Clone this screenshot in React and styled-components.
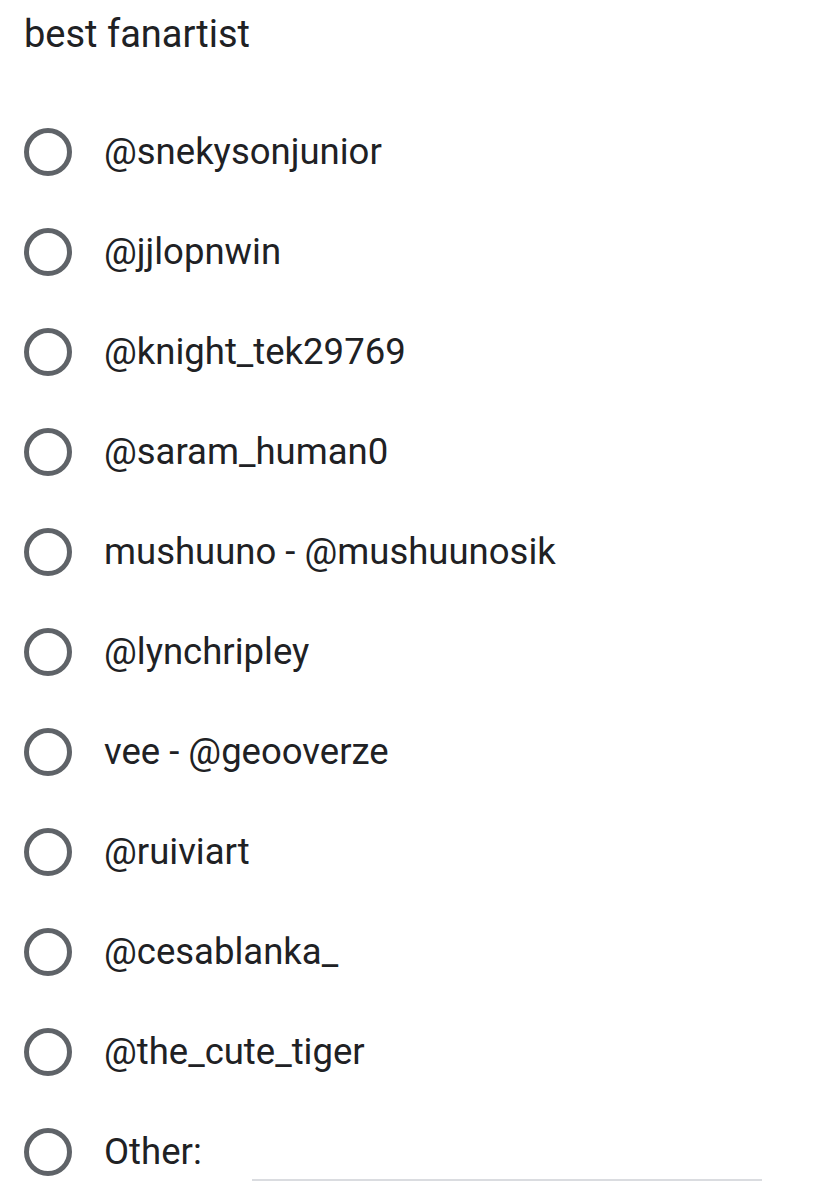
import React from 'react'
import styled, { createGlobalStyle } from 'styled-components'

const Global = createGlobalStyle`
  body {
    margin: 0;
    background: #fff;
    font-family: Roboto, 'Liberation Sans', sans-serif;
    color: #202124;
  }
`

const Page = styled.div`
  width: 823px;
  height: 1200px;
  overflow: hidden;
  background: #fff;
`

const Title = styled.div`
  height: 102px;
  box-sizing: border-box;
  padding: 12px 0 0 24px;
  font-size: 38px;
  line-height: 44px;
  color: #202124;
`

const List = styled.div`
  display: flex;
  flex-direction: column;
`

const Row = styled.label`
  display: flex;
  align-items: center;
  height: 100px;
  padding-left: 24px;
`

const Radio = styled.span`
  flex: none;
  width: 48px;
  height: 48px;
  box-sizing: border-box;
  border: 5px solid #5f6368;
  border-radius: 50%;
  margin-right: 32px;
`

const Text = styled.span`
  font-size: 36.5px;
  line-height: 44px;
  color: #202124;
`

const OtherInput = styled.span`
  align-self: flex-end;
  width: 510px;
  margin: 0 0 21px 50px;
  border-bottom: 2px solid #dadce0;
`

const options = [
  '@snekysonjunior',
  '@jjlopnwin',
  '@knight_tek29769',
  '@saram_human0',
  'mushuuno - @mushuunosik',
  '@lynchripley',
  'vee - @geooverze',
  '@ruiviart',
  '@cesablanka_',
  '@the_cute_tiger',
]

export default function App() {
  return (
    <Page>
      <Global />
      <Title>best fanartist</Title>
      <List>
        {options.map((o) => (
          <Row key={o}>
            <Radio />
            <Text>{o}</Text>
          </Row>
        ))}
        <Row>
          <Radio />
          <Text>Other:</Text>
          <OtherInput />
        </Row>
      </List>
    </Page>
  )
}
